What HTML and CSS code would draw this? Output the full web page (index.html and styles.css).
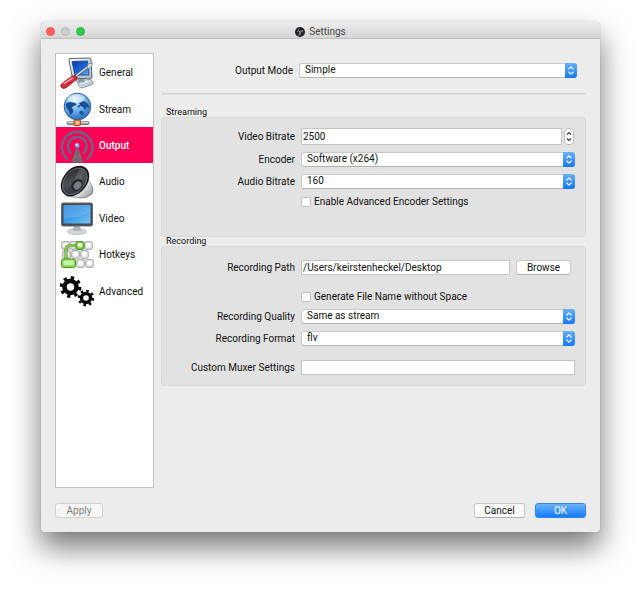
FILE: index.html
```html
<!DOCTYPE html>
<html lang="en">
<head>
<meta charset="utf-8">
<title>Settings</title>
<link rel="stylesheet" href="styles.css">
</head>
<body>
<svg class="defs" width="0" height="0" aria-hidden="true">
  <defs>
    <linearGradient id="screen" x1="0" y1="0" x2="1" y2="1"><stop offset="0" stop-color="#0836a5"/><stop offset=".55" stop-color="#1c65d8"/><stop offset="1" stop-color="#5eb6fb"/></linearGradient>
    <linearGradient id="shell" x1="0" y1="0" x2="1" y2="1"><stop offset="0" stop-color="#fbfcfd"/><stop offset="1" stop-color="#a9b6bd"/></linearGradient>
    <radialGradient id="globe" cx=".4" cy=".25" r=".75"><stop offset="0" stop-color="#e3f4ff"/><stop offset=".5" stop-color="#79b8ef"/><stop offset="1" stop-color="#2b6dbc"/></radialGradient>
    <linearGradient id="display" x1="0" y1="0" x2="1" y2="1"><stop offset="0" stop-color="#2b83d6"/><stop offset=".5" stop-color="#3d9ae8"/><stop offset="1" stop-color="#7cc5f7"/></linearGradient>
    <linearGradient id="cone" x1="0" y1="0" x2="1" y2="1"><stop offset="0" stop-color="#1d1f22"/><stop offset=".5" stop-color="#4b5055"/><stop offset="1" stop-color="#26292c"/></linearGradient>
    <linearGradient id="metal" x1="0" y1="0" x2="1" y2="1"><stop offset="0" stop-color="#777b80"/><stop offset=".6" stop-color="#eceeef"/><stop offset="1" stop-color="#85898d"/></linearGradient>
    <symbol id="updown" viewBox="0 0 12 15"><path d="M3.8 6 6 3.8 8.2 6M3.8 9 6 11.2 8.2 9" fill="none" stroke="currentColor" stroke-width="1.1" stroke-linecap="round" stroke-linejoin="round"/></symbol>
    <symbol id="key" viewBox="0 0 8 8"><rect x=".6" y=".6" width="6.8" height="6.8" rx="1.7" fill="#e1e1e1" stroke="#b2b2b2"/><rect x="2" y="1.5" width="4" height="4" rx="1" fill="#fff"/></symbol>
  </defs>
</svg>
<div class="window">
  <header class="titlebar">
    <div class="lights">
      <button class="light close" aria-label="Close"></button>
      <button class="light minimise" aria-label="Minimise"></button>
      <button class="light zoom" aria-label="Zoom"></button>
    </div>
    <h1 class="title">
      <svg class="logo" viewBox="0 0 20 20" aria-hidden="true"><circle cx="10" cy="10" r="10" fill="#242226"/><g fill="none" stroke="#aaa6aa" stroke-width="1.3"><path d="M8 3.5a4 4 0 0 0 2 6.5 4 4 0 0 0 5-4"/><path d="M16.5 9a4 4 0 0 0-6.5 1 4 4 0 0 0 2 6"/><path d="M6 16a4 4 0 0 0 4-6 4 4 0 0 0-6-.5"/></g></svg>
      Settings
    </h1>
  </header>
  <div class="content">
    <nav class="sidebar" aria-label="Categories">
      <div class="categories">
      <a class="category" href="#general">
        <svg class="icon" viewBox="0 0 34 34" aria-hidden="true">
          <path d="M16 24 29 22l4 4q1 2-2 3l-9 3q-2 0-3-2z" fill="url(#shell)" stroke="#7d8b95" stroke-width=".8"/>
          <path d="m18 26 10-2 2 2-10 3z" fill="#e5f2f8" stroke="#9ab1c0" stroke-width=".5"/>
          <path d="m17 21 7 1 1 4-7 1z" fill="#8d9ba3"/>
          <path d="M9.5 2.5 29 2q2 0 2 2l1 17q0 2-2 2L14 22q-1.500 0-2-2L9 4z" fill="url(#shell)" stroke="#536471"/>
          <path d="M12 5.500 27.500 5 29 19l-14 .3z" fill="url(#screen)" stroke="#173f85" stroke-width=".8"/>
          <path d="m13 22 16.500-12.500" stroke="#596269" stroke-width="2.800" stroke-linecap="round"/>
          <path d="m13 22 16.500-12.500" stroke="#d9e1e4" stroke-width="1.400" stroke-linecap="round"/>
          <path d="m27 12 1-4 4.500-1-.5 3-3 2.500z" fill="#d5dde0" stroke="#67727a" stroke-width=".6"/>
          <path d="M15 19.500q2.500 1 2 3.500L6.500 31.500Q3.500 33.500 1.500 31.500T2.500 27l9-6.500z" fill="#d22b39" stroke="#861823" stroke-width=".8"/>
          <path d="m4 27.500 8.500-5.500" stroke="#ff98a0" stroke-width="1.500" stroke-linecap="round"/>
        </svg>
        General</a>
      <a class="category" href="#stream">
        <svg class="icon" viewBox="0 0 34 34" aria-hidden="true">
          <path d="M17 26v6" stroke="#888" stroke-width="3"/><path d="M8.500 31h19" stroke="#777" stroke-width="4" stroke-linecap="round"/><path d="M8.500 30.500h19" stroke="#d4d4d4" stroke-width="2" stroke-linecap="round"/>
          <circle cx="17.500" cy="14.500" r="13.300" fill="url(#globe)" stroke="#2b61a3"/>
          <path d="M5.500 12q2-2 5-2l5 1 1 2-3 1-2 2 2 2-1 3-2 2-2-5-2-2zM19 11l5-2 4 3 2 4-3-1-2 3-2-3-3-1-1 2-2-2 3-1z" fill="#194e91"/>
          <path d="M20 19q3-1 4 2l-2 3-3-3z" fill="#205b9f"/>
          <ellipse cx="16" cy="6.500" rx="9" ry="4" fill="#fff" opacity=".4"/>
          <rect x="14" y="28" width="6.500" height="5.500" rx="1" fill="#ef9259" stroke="#a3501f"/><rect x="16" y="29.500" width="2.500" height="2" fill="#ffe1c5"/>
        </svg>
        Stream</a>
      <a class="category selected" href="#output" aria-current="page">
        <svg class="icon" viewBox="0 0 34 34" aria-hidden="true">
          <g fill="none" stroke="#6c6388" stroke-width="2.400"><path d="M8 30.500a15.300 15.300 0 1 1 18.500 0"/><path d="M11.500 24.500a9.300 9.300 0 1 1 11.500 0"/></g>
          <path d="M17.200 17 23.500 33q-6 1.500-12.500 0z" fill="#75646a"/>
          <path d="m16.500 20-3 12m4.500-12 3 12m-6.500-6 6 5m-.5-6-6 5" stroke="#857377" stroke-width=".6"/>
          <circle cx="17.200" cy="16.500" r="2.400" fill="#55a9ed"/><circle cx="16.700" cy="15.800" r="1.200" fill="#d0efff"/>
        </svg>
        Output</a>
      <a class="category" href="#audio">
        <svg class="icon" viewBox="0 0 34 34" aria-hidden="true">
          <path d="M22 6q6 8 10 15 2 4 0 8-4 4-11 4L6 31z" fill="url(#metal)" stroke="#6d7175" stroke-width=".7"/>
          <ellipse cx="15" cy="16" rx="12" ry="17" transform="rotate(39 15 16)" fill="#111315"/>
          <ellipse cx="14.800" cy="16.300" rx="10.300" ry="15" transform="rotate(39 14.800 16.300)" fill="url(#cone)" stroke="#83888c" stroke-width=".7"/>
          <path d="M14 15 20 3l4 1q2 3-1 8l-6 6z" fill="#8c9297" opacity=".3"/>
          <ellipse cx="17" cy="20" rx="5" ry="6.500" transform="rotate(39 17 20)" fill="#202326"/>
          <ellipse cx="17.500" cy="20.500" rx="3.500" ry="4.500" transform="rotate(39 17.500 20.500)" fill="#777d82"/>
        </svg>
        Audio</a>
      <a class="category" href="#video">
        <svg class="icon" viewBox="0 0 34 34" aria-hidden="true">
          <ellipse cx="17" cy="30.500" rx="9.500" ry="3" fill="#d4d7da" stroke="#aaaeb1" stroke-width=".7"/><path d="M14 25h6l1 5h-8z" fill="#afb3b6"/>
          <rect x="1.500" y="2" width="31" height="23" rx="1.500" fill="#454b51" stroke="#656b70"/>
          <path d="M3.500 4h27v18.500h-27z" fill="url(#display)"/><path d="M3.500 4h27v7Q16 18 3.500 17z" fill="#fff" opacity=".15"/>
        </svg>
        Video</a>
      <a class="category" href="#hotkeys">
        <svg class="icon" viewBox="0 0 34 34" aria-hidden="true">
          <use href="#key" x="1" y="3" width="9" height="9"/><use href="#key" x="9" y="3" width="9" height="9"/><use href="#key" x="24" y="3" width="9" height="9"/>
          <use href="#key" x="2" y="12" width="9" height="9"/><use href="#key" x="11" y="12" width="9" height="9"/><use href="#key" x="20" y="12" width="9" height="9"/>
          <use href="#key" x="16" y="21" width="9" height="9"/><use href="#key" x="25" y="21" width="9" height="9"/>
          <path d="M18 7.500h-8Q6 7.500 6 12v10" fill="none" stroke="#529b29" stroke-width="3.200"/><path d="M18 7.500h-8Q6 7.500 6 12v10" fill="none" stroke="#91cb60" stroke-width="1.800"/>
          <rect x="16" y="3.500" width="8" height="8" rx="2" fill="#81c94c" stroke="#489421"/><circle cx="20" cy="7" r="2.500" fill="#e2ffc8"/>
          <rect x="1.500" y="21" width="14" height="8.500" rx="2" fill="#8ed957" stroke="#409b1b"/><rect x="3.500" y="22.500" width="10" height="4.500" rx="1" fill="#c3f7a1"/>
        </svg>
        Hotkeys</a>
      <a class="category" href="#advanced">
        <svg class="icon" viewBox="0 0 34 34" aria-hidden="true">
          <g fill="none" stroke="#080808"><circle cx="10.500" cy="13" r="6" stroke-width="4.600"/><circle cx="10.500" cy="13" r="9.300" stroke-width="3.200" stroke-dasharray="3.300 4.004"/><circle cx="26" cy="24" r="4.500" stroke-width="3.400"/><circle cx="26" cy="24" r="7" stroke-width="2.600" stroke-dasharray="2.500 2.998"/></g>
        </svg>
        Advanced</a>
      </div>
    </nav>
    <main class="panel">
      <div class="mode">
        <label for="mode">Output Mode</label>
        <div class="select"><select id="mode"><option>Simple</option><option>Advanced</option></select><svg class="arrows" aria-hidden="true"><use href="#updown"/></svg></div>
      </div>
      <hr class="rule">
      <section class="group">
        <h2>Streaming</h2>
        <div class="box streaming">
          <label for="vbitrate">Video Bitrate</label>
          <div class="spin">
            <input class="field" id="vbitrate" type="text" inputmode="numeric" value="2500">
            <button class="stepper" aria-label="Change video bitrate"><svg viewBox="0 0 8 15" aria-hidden="true"><path d="M2 5.500 4 3.500 6 5.500M2 9.500 4 11.500 6 9.500" fill="none" stroke="#333" stroke-width="1.100"/></svg></button>
          </div>
          <label for="encoder">Encoder</label>
          <div class="select"><select id="encoder"><option>Software (x264)</option></select><svg class="arrows" aria-hidden="true"><use href="#updown"/></svg></div>
          <label for="abitrate">Audio Bitrate</label>
          <div class="select"><select id="abitrate"><option>160</option></select><svg class="arrows" aria-hidden="true"><use href="#updown"/></svg></div>
          <label class="check"><input type="checkbox">Enable Advanced Encoder Settings</label>
        </div>
      </section>
      <section class="group">
        <h2>Recording</h2>
        <div class="box recording">
          <label for="path">Recording Path</label>
          <div class="path"><input class="field" id="path" type="text" value="/Users/keirstenheckel/Desktop"><button class="button">Browse</button></div>
          <label class="check filename">
            <input type="checkbox">Generate File Name without Space</label>
          <label for="quality">Recording Quality</label>
          <div class="select"><select id="quality"><option>Same as stream</option></select><svg class="arrows" aria-hidden="true"><use href="#updown"/></svg></div>
          <label for="format">Recording Format</label>
          <div class="select"><select id="format"><option>flv</option></select><svg class="arrows" aria-hidden="true"><use href="#updown"/></svg></div>
          <label class="spaced" for="muxer">Custom Muxer Settings</label>
          <input class="field spaced" id="muxer" type="text">
        </div>
      </section>
    </main>
  </div>
  <footer class="actions">
    <button class="button apply" disabled>Apply</button>
    <button class="button">Cancel</button>
    <button class="button primary">OK</button>
  </footer>
</div>
</body>
</html>
```
FILE: styles.css
```css
* { box-sizing: border-box; }

body {
  margin: 0;
  min-height: 100vh;
  padding: 22px 41px 58px;
  display: flex;
  background: #fff;
  color: #111;
  font: 10px/15px Roboto, sans-serif;
}

input, select, button { font: inherit; color: inherit; margin: 0; }

.defs { position: absolute; }

.window {
  flex: 1;
  display: flex;
  flex-direction: column;
  background: #ececec;
  border-radius: 4px 4px 3px 3px;
  box-shadow: 0 0 1px rgba(0, 0, 0, .45), 0 15px 30px rgba(0, 0, 0, .55);
}

.titlebar {
  height: 17px;
  display: grid;
  grid-template-columns: 1fr auto 1fr;
  align-items: center;
  padding: 2px 5px 0;
  border-bottom: 1px solid #bebebe;
  border-radius: 4px 4px 0 0;
  background: linear-gradient(#ececec, #d5d5d5);
}

.lights { display: flex; gap: 6px; }

.light {
  width: 9px;
  height: 9px;
  padding: 0;
  border: 1px solid #ee5553;
  border-radius: 50%;
  background: #fc605c;
}
.minimise { border-color: #bababa; background: #cecece; }
.zoom { border-color: #2fbb42; background: #34c84a; }

.title {
  margin: 0;
  display: flex;
  align-items: center;
  gap: 4px;
  font-size: 10px;
  font-weight: 400;
  color: #484848;
}
.logo { width: 10px; height: 10px; }

.content {
  flex: 1;
  display: flex;
  gap: 7px;
  padding: 14px 14px 0;
}

.sidebar {
  width: 99px;
  border: 1px solid #c2c2c2;
  background: #fff;
}
.categories {
  height: 255px;
  display: grid;
  grid-auto-rows: 1fr;
}
.category {
  display: flex;
  align-items: center;
  gap: 5px;
  padding: 1px 0 0 4px;
  color: inherit;
  text-decoration: none;
}
.selected { background: #ff0055; color: #fff; font-weight: 500; }
.icon { width: 34px; height: 34px; flex: none; }

.panel { flex: 1; min-width: 0; }

.mode {
  display: grid;
  grid-template-columns: 132px 1fr;
  gap: 6px;
  margin-top: 10px;
  padding-right: 9px;
  text-align: right;
}

.rule {
  height: 2px;
  margin: 15px 0 13px;
  border: 0;
  border-top: 1px solid #d2d2d2;
  border-bottom: 1px solid #dfdfdf;
}

.group h2 {
  margin: 0;
  padding-left: 5px;
  font-size: 9px;
  line-height: 9px;
  font-weight: 400;
}

.box {
  display: grid;
  grid-template-columns: 133px 1fr;
  gap: 7px 6px;
  align-items: center;
  padding: 10px 10px 10px 0;
  border: 1px solid #dadada;
  border-radius: 3px;
  background: #e2e2e2;
}
.box > label { text-align: right; }
.streaming { padding-bottom: 29px; }
.recording { padding-top: 13px; }

.select {
  position: relative;
  height: 15px;
}
.select select {
  appearance: none;
  display: block;
  width: 100%;
  height: 15px;
  padding: 0 16px 1px 5px;
  border: 1px solid #c9c9c9;
  border-bottom-color: #b3b3b3;
  border-radius: 3px;
  background: #fff;
  line-height: 12px;
}
.arrows {
  position: absolute;
  top: 0;
  right: 0;
  width: 12px;
  height: 15px;
  border-radius: 0 3px 3px 0;
  background: linear-gradient(#67b0fa, #1578fb);
  color: #fff;
  pointer-events: none;
}

.field {
  width: 100%;
  min-width: 0;
  height: 15px;
  padding: 0 1px;
  border: 1px solid #c4c4c4;
  border-radius: 0;
  background: #fff;
}

.spin { display: flex; gap: 2px; padding-right: 1px; }
.spin .field { height: 17px; }
.stepper {
  flex: none;
  width: 10px;
  height: 17px;
  padding: 0;
  border: 1px solid #bcbcbc;
  border-radius: 4px;
  background: #fff;
}
.stepper svg { display: block; width: 8px; height: 15px; }

.path { display: flex; gap: 6px; padding-right: 4px; }
.path .button { width: 55px; }

.box > .check {
  grid-column: 2;
  display: flex;
  align-items: center;
  gap: 3px;
  height: 11px;
  text-align: left;
}
.check input {
  appearance: none;
  width: 10px;
  height: 10px;
  border: 1px solid #bfbfbf;
  border-radius: 2px;
  background: #fff;
}
.spaced { margin-top: 7px; }
.filename { margin-top: 9px; }

.button {
  flex: none;
  width: 51px;
  height: 15px;
  padding: 0;
  border: 1px solid #c6c6c6;
  border-bottom-color: #b0b0b0;
  border-radius: 3px;
  background: #fff;
  line-height: 12px;
}

.actions {
  display: flex;
  gap: 10px;
  padding: 15px 14px 14px;
}
.apply {
  width: 48px;
  margin-right: auto;
  border-color: #d2d2d2;
  background: #f5f5f5;
  color: #808080;
}
.primary {
  border-color: #2c86ee;
  background: linear-gradient(#6bb3fa, #147bfb);
  color: #fff;
}
```
